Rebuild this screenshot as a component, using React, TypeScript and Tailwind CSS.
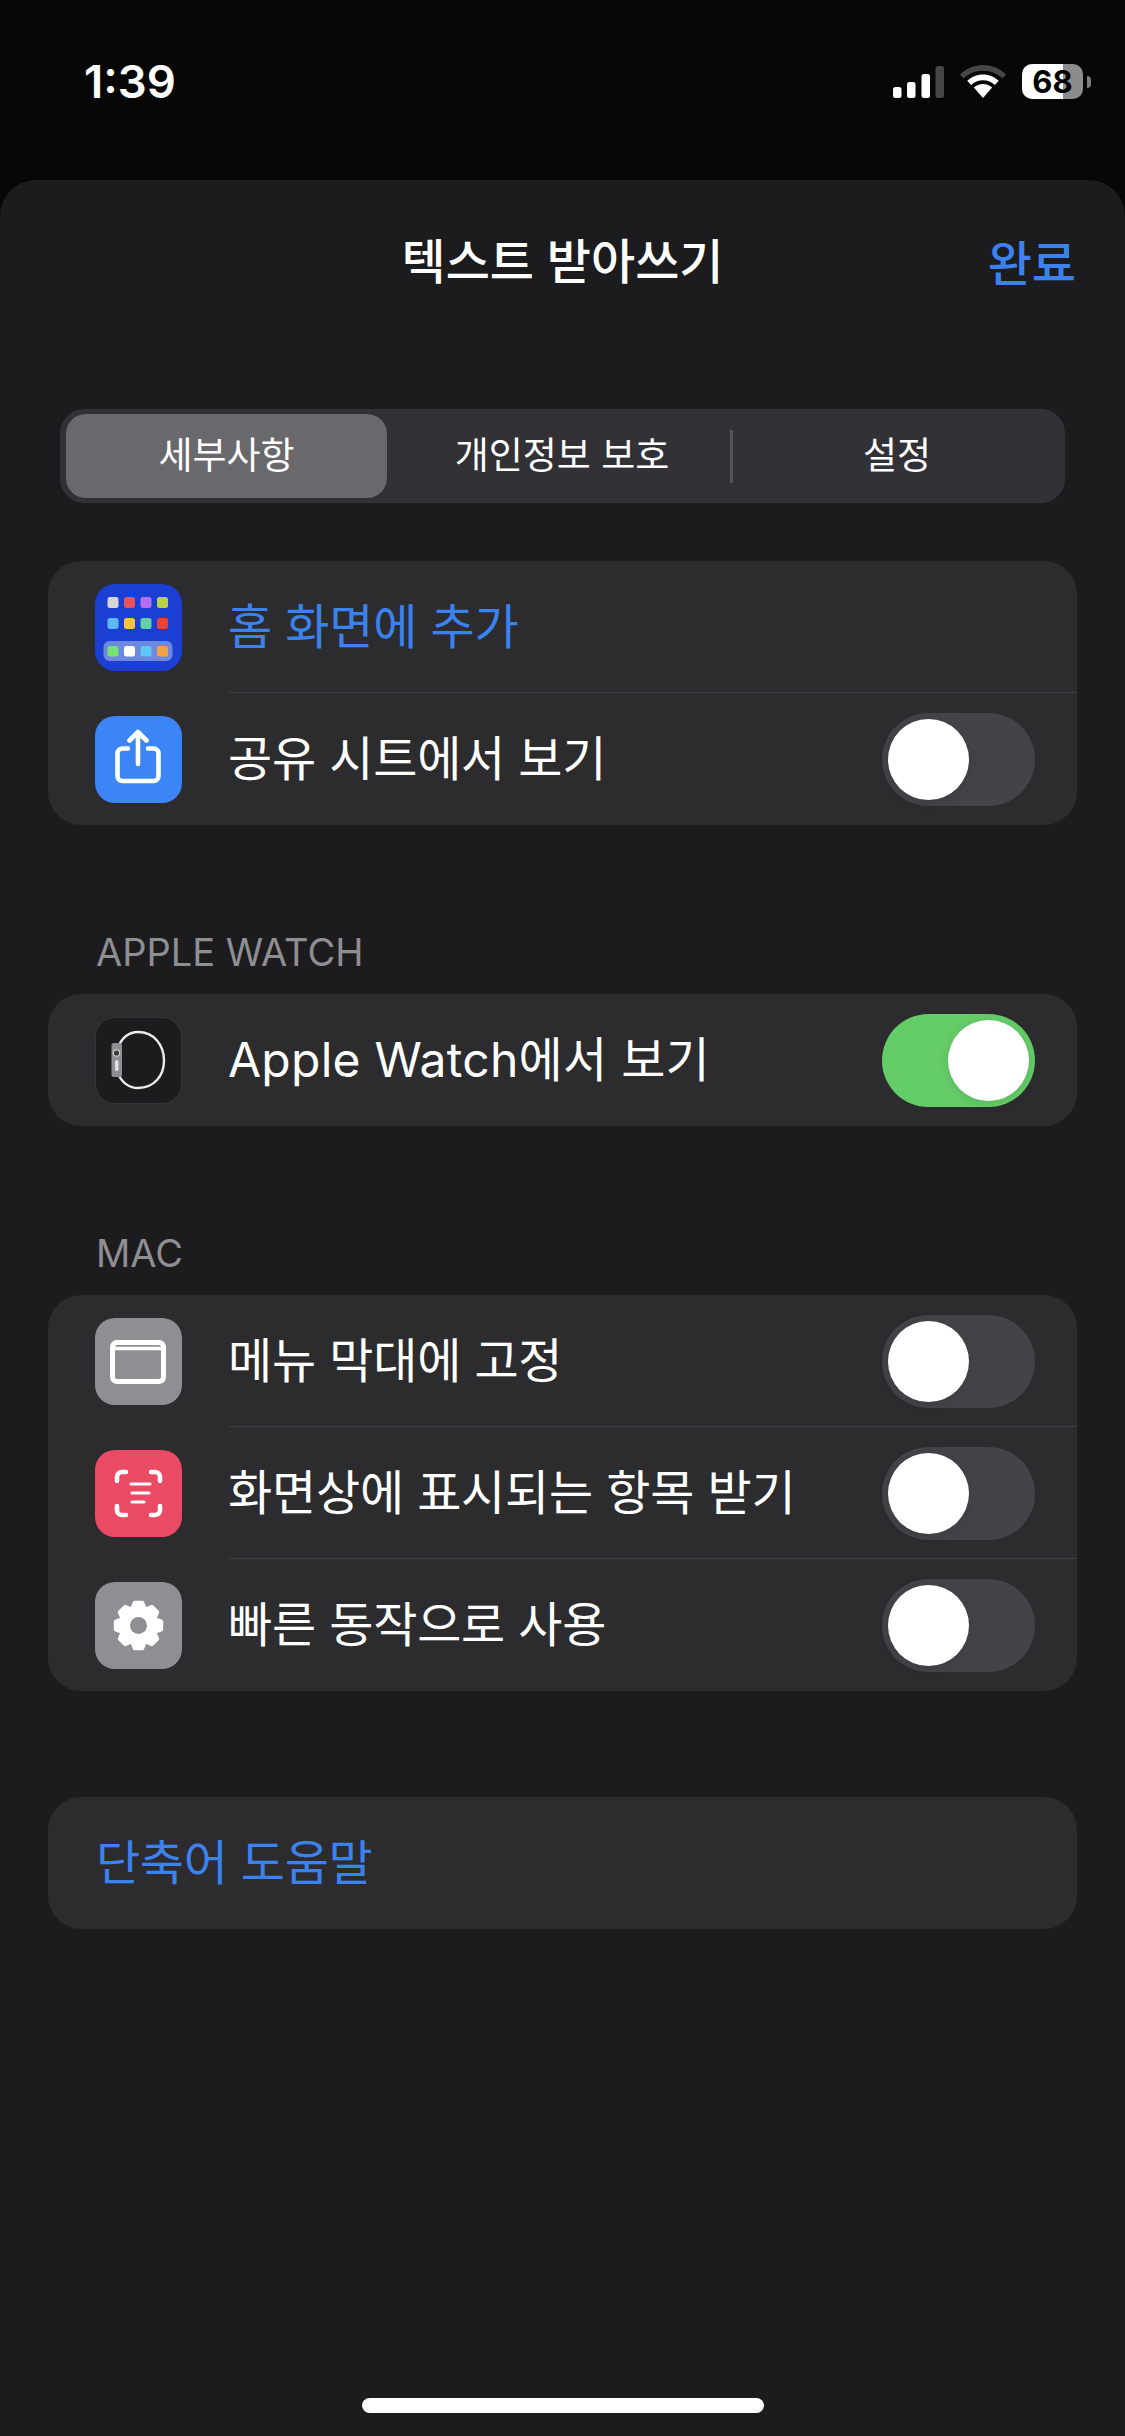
const FONT = "font-['Inter','Noto_Sans_CJK_KR',sans-serif]";

function Toggle({ on = false }: { on?: boolean }) {
  return (
    <div className={`flex h-[93px] w-[153px] shrink-0 items-center rounded-full px-[6px] ${on ? "justify-end bg-[#65cd68]" : "justify-start bg-[#434348]"}`}>
      <div className="h-[81px] w-[81px] rounded-full bg-white shadow-[0_2px_12px_rgba(0,0,0,0.12)]" />
    </div>
  );
}

function Tile({ className, children }: { className: string; children: React.ReactNode }) {
  return (
    <div className={`flex h-[87px] w-[87px] shrink-0 items-center justify-center rounded-[20px] ${className}`}>
      <svg width="87" height="87" viewBox="0 0 87 87" className="shrink-0">{children}</svg>
    </div>
  );
}

function HomeGlyph() {
  const xs = [12.5, 29, 45.5, 62];
  const r1 = ["#d6d6d6", "#e8525c", "#b26ff0", "#bcd246"];
  const r2 = ["#5ab9f6", "#f5c242", "#62d2a2", "#e8443c"];
  const r3 = ["#7ae272", "#ffffff", "#5cc8f6", "#f5a246"];
  return (
    <>
      {xs.map((x, i) => <rect key={`a${i}`} x={x} y="13" width="11" height="11" rx="2.5" fill={r1[i]} />)}
      {xs.map((x, i) => <rect key={`b${i}`} x={x} y="34" width="11" height="11" rx="2.5" fill={r2[i]} />)}
      <rect x="8.5" y="57" width="69" height="20" rx="6" fill="#6d88dc" />
      {xs.map((x, i) => <rect key={`c${i}`} x={x} y="62" width="11" height="10.5" rx="2.5" fill={r3[i]} />)}
    </>
  );
}

function ShareGlyph() {
  return (
    <g fill="none" stroke="#fff" strokeWidth="4.6" strokeLinecap="round" strokeLinejoin="round">
      <path d="M33 32.5h-5.500a5 5 0 0 0-5 5V60a5 5 0 0 0 5 5h31a5 5 0 0 0 5-5V37.500a5 5 0 0 0-5-5H53" />
      <path d="M43 48V17M34.500 24.500 43 16l8.500 8.500" />
    </g>
  );
}

function WatchGlyph() {
  return (
    <>
      <path d="M23 30C28 19 35 15 43 15 59 15 69 28 69 43.500 69 59 59 71 43 71 35 71 28 67 23 57" fill="none" stroke="#ececec" strokeWidth="2.4" strokeLinecap="round" />
      <rect x="16.500" y="26" width="10.500" height="34" rx="2.500" fill="#8f8f93" />
      <circle cx="21.500" cy="36" r="3.200" fill="#3a3a3c" stroke="#c8c8c8" strokeWidth="1.200" />
      <rect x="20" y="43" width="3.500" height="11" rx="1.700" fill="#e2e2e2" />
    </>
  );
}

function WindowGlyph() {
  return (
    <g fill="none" stroke="#fff">
      <rect x="17.500" y="24.500" width="51" height="39" rx="4.500" strokeWidth="5" />
      <path d="M18 30.500h50" strokeWidth="3.500" />
    </g>
  );
}

function ScanGlyph() {
  return (
    <g fill="none" stroke="#fff" strokeLinecap="round" strokeLinejoin="round" strokeWidth="4.6">
      <path d="M22 31v-4a5 5 0 0 1 5-5h4M56 22h4a5 5 0 0 1 5 5v4M65 56v4a5 5 0 0 1-5 5h-4M31 65h-4a5 5 0 0 1-5-5v-4" />
      <path d="M36 34h19M37 43h17M37 52h12" strokeWidth="3.200" />
    </g>
  );
}

function gearPath() {
  const teeth = 8;
  const pts: string[] = [];
  for (let i = 0; i < teeth; i++) {
    const a = (i * Math.PI * 2) / teeth - Math.PI / 2;
    const w = Math.PI / teeth;
    [
      [17.5, -w * 0.95],
      [23, -w * 0.42],
      [23, w * 0.42],
      [17.5, w * 0.95],
    ].forEach(([r, d]) => {
      pts.push(`${(43.5 + r * Math.cos(a + d)).toFixed(2)},${(43.5 + r * Math.sin(a + d)).toFixed(2)}`);
    });
  }
  return `M${pts.join("L")}Z`;
}

function GearGlyph() {
  return (
    <>
      <path d={gearPath()} fill="#fff" stroke="#fff" strokeWidth="4" strokeLinejoin="round" />
      <circle cx="43.500" cy="43.500" r="8.500" fill="#8e8e93" />
    </>
  );
}

function Row({ icon, label, blue, toggle, last, wide }: { icon: React.ReactNode; label: string; blue?: boolean; toggle?: "on" | "off"; last?: boolean; wide?: boolean }) {
  return (
    <div className="flex h-[132px] items-center pl-[47px]">
      {icon}
      <div className={`ml-[46px] flex h-full flex-1 items-center justify-between pr-[27px] ${last ? "" : "border-b-[1.5px] border-[#3d3d41] pt-[1.5px]"}`}>
        <span className={`text-[48px] leading-none ${wide ? "tracking-[0.25px]" : "tracking-[-0.2px]"} ${blue ? "text-[#3b82ee]" : "text-white"}`}>{label}</span>
        {toggle && <div className="mr-[15px]"><Toggle on={toggle === "on"} /></div>}
      </div>
    </div>
  );
}

function Card({ children, className = "" }: { children: React.ReactNode; className?: string }) {
  return <div className={`mx-[48px] overflow-hidden rounded-[33px] bg-[#2c2c2e] ${className}`}>{children}</div>;
}

function SectionLabel({ children }: { children: React.ReactNode }) {
  return <div className="ml-[96px] mt-[104px] mb-[19px] h-[46px] text-[38px] leading-[46px] text-[#8e8e93]">{children}</div>;
}

export default function App() {
  return (
    <div className={`flex h-[2436px] w-[1125px] flex-col overflow-hidden bg-[#060706] ${FONT}`}>
      <div className="flex h-[180px] shrink-0 items-start justify-between pl-[84px] pr-[34px] pt-[55px]">
        <span className="text-[45.5px] font-semibold leading-[54px] text-white">1:39</span>
        <div className="mt-[9px] flex items-center">
          <svg width="52" height="33" viewBox="0 0 52 33" className="mt-[1px]">
            <rect x="0" y="21" width="8.500" height="11" rx="2.500" fill="#fff" />
            <rect x="14" y="16" width="8.500" height="16" rx="2.500" fill="#fff" />
            <rect x="28.500" y="8" width="8.500" height="24" rx="2.500" fill="#fff" />
            <rect x="42.500" y="0" width="8.500" height="32" rx="2.500" fill="#464646" />
          </svg>
          <svg width="46" height="34" viewBox="0 0 46 34" className="ml-[15px]">
            <path d="M23 0C14 0 6 3.600 0 9.500l3.500 4C8.500 8.700 15.500 5.800 23 5.800s14.500 2.900 19.500 7.700l3.500-4C40 3.600 32 0 23 0Z" fill="#464646" />
            <path d="M23 9.500c-6 0-11.600 2.400-15.700 6.300l3.800 4.200C14.200 17 18.400 15.300 23 15.300S31.800 17 34.900 20l3.800-4.200C34.600 11.900 29 9.500 23 9.500Z" fill="#fff" />
            <path d="M23 19c-3.500 0-6.700 1.300-9.100 3.500l9.100 10.500 9.100-10.500C29.700 20.300 26.500 19 23 19Z" fill="#fff" />
          </svg>
          <div className="ml-[16px] flex items-center">
            <div className="relative flex h-[35px] w-[61px] items-center justify-center overflow-hidden rounded-[10px] bg-[linear-gradient(90deg,#ffffff_0,#ffffff_68%,#8c8c8c_68%,#8c8c8c_100%)]">
              <span className="text-[31px] font-bold leading-none text-black">68</span>
            </div>
            <div className="ml-[4px] h-[12px] w-[4px] rounded-r-full bg-[#7d7d7d]" />
          </div>
        </div>
      </div>

      <div className="flex flex-1 flex-col rounded-t-[36px] bg-[#1c1c1e]">
        <div className="relative flex h-[164px] shrink-0 items-center justify-center">
          <span className="text-[48px] font-medium leading-none text-white">텍스트 받아쓰기</span>
          <span className="absolute right-[49px] top-[60px] text-[48px] font-medium leading-none text-[#3b82ee]">완료</span>
        </div>

        <div className="mx-[60px] mt-[65px] flex h-[94px] shrink-0 items-center rounded-[24px] bg-[#313136] px-[6px] text-[37px] text-white">
          <div className="flex h-[84px] w-[321px] shrink-0 items-center justify-center rounded-[20px] bg-[#68686d]">세부사항</div>
          <div className="flex h-full flex-1 items-center justify-center pl-[7px]">개인정보 보호</div>
          <div className="h-[53px] w-[3px] bg-[#545458]" />
          <div className="flex h-full w-[326px] items-center justify-center pl-[2px]">설정</div>
        </div>

        <Card className="mt-[58px]">
          <Row icon={<Tile className="bg-[#1a3fd2]"><HomeGlyph /></Tile>} label="홈 화면에 추가" blue />
          <Row icon={<Tile className="bg-[#3c85f6]"><ShareGlyph /></Tile>} label="공유 시트에서 보기" toggle="off" last />
        </Card>

        <SectionLabel>APPLE WATCH</SectionLabel>
        <Card>
          <Row icon={<Tile className="border border-[#36363a] bg-[#1c1c1e]"><WatchGlyph /></Tile>} label="Apple Watch에서 보기" toggle="on" last wide />
        </Card>

        <SectionLabel>MAC</SectionLabel>
        <Card>
          <Row icon={<Tile className="bg-[#8e8e93]"><WindowGlyph /></Tile>} label="메뉴 막대에 고정" toggle="off" />
          <Row icon={<Tile className="bg-[#ea4a64]"><ScanGlyph /></Tile>} label="화면상에 표시되는 항목 받기" toggle="off" />
          <Row icon={<Tile className="bg-[#8e8e93]"><GearGlyph /></Tile>} label="빠른 동작으로 사용" toggle="off" last />
        </Card>

        <Card className="mt-[106px]">
          <div className="flex h-[132px] items-center pl-[48px] text-[48px] leading-none tracking-[-0.3px] text-[#3b82ee]">단축어 도움말</div>
        </Card>

        <div className="mb-[23px] mt-auto h-[15px] w-[402px] self-center rounded-full bg-white" />
      </div>
    </div>
  );
}
